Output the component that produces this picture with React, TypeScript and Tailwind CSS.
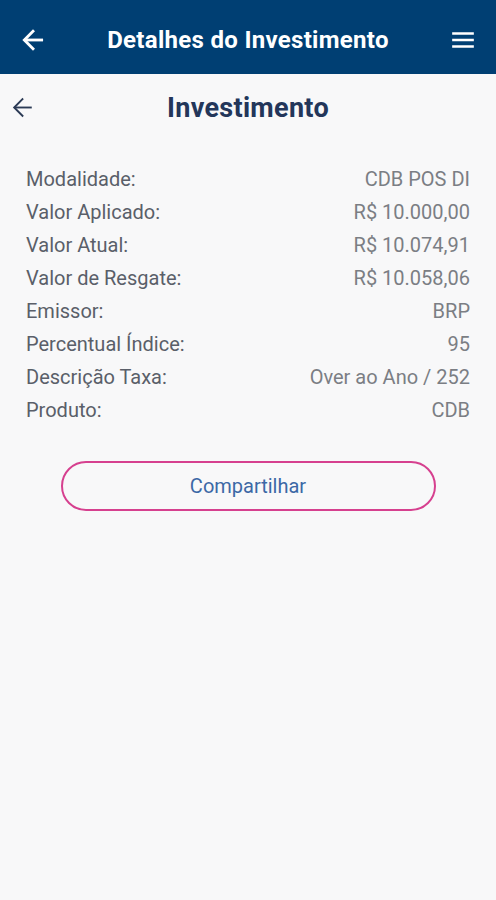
import React from "react";

const detalhes = [
  { label: "Modalidade:", value: "CDB POS DI" },
  { label: "Valor Aplicado:", value: "R$ 10.000,00" },
  { label: "Valor Atual:", value: "R$ 10.074,91" },
  { label: "Valor de Resgate:", value: "R$ 10.058,06" },
  { label: "Emissor:", value: "BRP" },
  { label: "Percentual Índice:", value: "95" },
  { label: "Descrição Taxa:", value: "Over ao Ano / 252" },
  { label: "Produto:", value: "CDB" },
];

const ArrowLeft = ({ className, stroke }: { className: string; stroke: number }) => (
  <svg viewBox="0 0 24 24" className={className} fill="none" stroke="currentColor" strokeWidth={stroke} strokeLinecap="square">
    <path d="M20 12H5" />
    <path d="M12 4l-8 8 8 8" />
  </svg>
);

const App = () => {
  return (
    <div className="flex min-h-[900px] w-[496px] flex-col bg-[#f8f8f9] font-['Roboto',sans-serif]">
      <header className="flex h-[74px] items-center justify-between bg-[#003f73] px-[20px] pt-[6px] text-white">
        <ArrowLeft className="h-[26px] w-[26px]" stroke={2.6} />
        <h1 className="text-[24px] font-bold tracking-[0.3px]">Detalhes do Investimento</h1>
        <svg viewBox="0 0 24 24" className="h-[26px] w-[26px]" fill="none" stroke="currentColor" strokeWidth={2.4}>
          <path d="M2 6h20M2 12h20M2 18h20" />
        </svg>
      </header>

      <div className="relative flex h-[68px] items-center justify-center">
        <ArrowLeft className="absolute left-[10px] top-[21px] h-[25px] w-[25px] text-[#2b3a55]" stroke={1.8} />
        <h2 className="text-[27px] font-bold tracking-[0.3px] text-[#23365a]">Investimento</h2>
      </div>

      <section className="mt-[20px] flex flex-col px-[26px]">
        {detalhes.map((d) => (
          <div key={d.label} className="flex h-[33px] items-center justify-between text-[20px]">
            <span className="text-[#5a5f69]">{d.label}</span>
            <span className="text-[#7b7e84]">{d.value}</span>
          </div>
        ))}
      </section>

      <div className="mt-[35px] flex justify-center">
        <button className="flex h-[50px] w-[375px] items-center justify-center rounded-full border-2 border-[#d6408f] text-[20px] text-[#3c68a6]">
          Compartilhar
        </button>
      </div>
    </div>
  );
};

export default App;
